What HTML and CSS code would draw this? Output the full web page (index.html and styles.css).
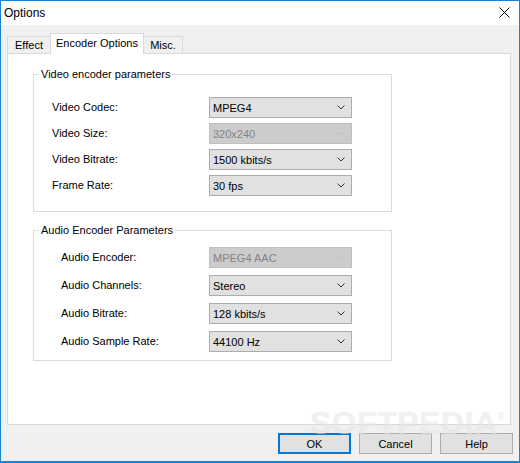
FILE: index.html
```html
<!DOCTYPE html>
<html lang="en">
<head>
    <meta charset="UTF-8">
    <title>Options</title>
    <link rel="stylesheet" href="styles.css">
</head>
<body>
    <div class="window">
        <div class="titlebar">
            <span class="title">Options</span>
            <svg class="close" width="11" height="11" viewBox="0 0 11 11">
                <path d="M0.5 0.5 L10.5 10.5 M10.5 0.5 L0.5 10.5" stroke="#000" stroke-width="1" fill="none"/>
            </svg>
        </div>

        <div class="dialog">
            <div class="tabs">
                <div class="tab tab-effect">Effect</div>
                <div class="tab tab-encoder active">Encoder Options</div>
                <div class="tab tab-misc">Misc.</div>
            </div>

            <div class="panel">
                <fieldset class="group group-video">
                    <legend>Video encoder parameters</legend>
                    <div class="rows">
                        <label>Video Codec:</label>
                        <div class="combo">MPEG4<svg class="arrow" width="8" height="5" viewBox="0 0 8 5"><path d="M0.5 0.5 L4 4 L7.5 0.5" fill="none" stroke="#333"/></svg></div>
                        <label>Video Size:</label>
                        <div class="combo disabled">320x240<svg class="arrow" width="8" height="5" viewBox="0 0 8 5"><path d="M0.5 0.5 L4 4 L7.5 0.5" fill="none" stroke="#bdbdbd"/></svg></div>
                        <label>Video Bitrate:</label>
                        <div class="combo">1500 kbits/s<svg class="arrow" width="8" height="5" viewBox="0 0 8 5"><path d="M0.5 0.5 L4 4 L7.5 0.5" fill="none" stroke="#333"/></svg></div>
                        <label>Frame Rate:</label>
                        <div class="combo">30 fps<svg class="arrow" width="8" height="5" viewBox="0 0 8 5"><path d="M0.5 0.5 L4 4 L7.5 0.5" fill="none" stroke="#333"/></svg></div>
                    </div>
                </fieldset>

                <fieldset class="group group-audio">
                    <legend>Audio Encoder Parameters</legend>
                    <div class="rows">
                        <label>Audio Encoder:</label>
                        <div class="combo disabled">MPEG4 AAC<svg class="arrow" width="8" height="5" viewBox="0 0 8 5"><path d="M0.5 0.5 L4 4 L7.5 0.5" fill="none" stroke="#bdbdbd"/></svg></div>
                        <label>Audio Channels:</label>
                        <div class="combo">Stereo<svg class="arrow" width="8" height="5" viewBox="0 0 8 5"><path d="M0.5 0.5 L4 4 L7.5 0.5" fill="none" stroke="#333"/></svg></div>
                        <label>Audio Bitrate:</label>
                        <div class="combo">128 kbits/s<svg class="arrow" width="8" height="5" viewBox="0 0 8 5"><path d="M0.5 0.5 L4 4 L7.5 0.5" fill="none" stroke="#333"/></svg></div>
                        <label>Audio Sample Rate:</label>
                        <div class="combo">44100 Hz<svg class="arrow" width="8" height="5" viewBox="0 0 8 5"><path d="M0.5 0.5 L4 4 L7.5 0.5" fill="none" stroke="#333"/></svg></div>
                    </div>
                </fieldset>
            </div>

            <div class="buttons">
                <button class="btn default">OK</button>
                <button class="btn">Cancel</button>
                <button class="btn">Help</button>
            </div>
        </div>

        <div class="watermark">SOFTPEDIA<sup>&reg;</sup></div>
    </div>
</body>
</html>
```

FILE: styles.css
```css
body {
    margin: 0;
    padding: 0;
    font-family: "Liberation Sans", Arial, sans-serif;
    font-size: 11px;
    color: #000;
}
.window {
    position: relative;
    width: 520px;
    height: 463px;
    box-sizing: border-box;
    border: 1px solid #1883d7;
    border-bottom-width: 2px;
    background-color: #f0f0f0;
    display: flex;
    flex-direction: column;
    overflow: hidden;
}
.titlebar {
    height: 24px;
    background-color: #fff;
    display: flex;
    justify-content: space-between;
    align-items: center;
}
.titlebar .title {
    font-size: 12px;
    padding-left: 3px;
    margin-top: -1px;
}
.titlebar .close {
    margin-right: 9px;
    margin-top: -2px;
}
.dialog {
    padding: 8px 8px 0 6px;
}
.tabs {
    position: relative;
    z-index: 1;
    height: 21px;
    margin-bottom: -1px;
    display: flex;
    align-items: flex-end;
}
.tab {
    box-sizing: border-box;
    height: 17px;
    margin-bottom: 1px;
    border: 1px solid #d9d9d9;
    border-bottom: 0;
    background-color: #f0f0f0;
    text-align: center;
    line-height: 16px;
}
.tab + .tab {
    margin-left: -1px;
}
.tab-effect {
    width: 44px;
}
.tab-encoder {
    width: 94px;
}
.tab-misc {
    width: 40px;
}
.tab.active {
    height: 21px;
    margin-bottom: 0;
    background-color: #fff;
    line-height: 18px;
}
.panel {
    box-sizing: border-box;
    height: 372px;
    border: 1px solid #d9d9d9;
    background-color: #fff;
    padding-left: 25px;
    padding-top: 13px;
}
.group {
    box-sizing: border-box;
    width: 359px;
    margin: 0;
    border: 1px solid #dcdcdc;
    padding: 0;
}
.group legend {
    margin-left: 5px;
    padding: 0 2px;
    line-height: 14px;
}
.group-video {
    padding: 16px 0 15px 0;
}
.group-audio {
    margin-top: 11px;
    padding: 10px 0 8px 0;
}
.rows {
    display: grid;
    grid-template-columns: 157px 143px;
    grid-auto-rows: 21px;
    row-gap: 5px;
    align-items: center;
    padding-left: 18px;
}
.group-audio .rows {
    grid-template-columns: 148px 143px;
    row-gap: 7px;
    padding-left: 27px;
}
.rows label {
    margin-top: -2px;
}
.combo {
    box-sizing: border-box;
    height: 21px;
    border: 1px solid #adadad;
    background-color: #e1e1e1;
    padding: 0 6px 0 3px;
    display: flex;
    align-items: center;
    justify-content: space-between;
}
.combo.disabled {
    border-color: #bfbfbf;
    background-color: #cccccc;
    color: #838383;
}
.buttons {
    display: flex;
    justify-content: flex-end;
    gap: 8px;
    margin-top: 8px;
    margin-right: -2px;
}
.btn {
    box-sizing: border-box;
    width: 73px;
    height: 21px;
    border: 1px solid #adadad;
    background-color: #e1e1e1;
    font-family: "Liberation Sans", Arial, sans-serif;
    font-size: 11px;
    color: #000;
    padding: 0;
}
.btn.default {
    border: 2px solid #0078d7;
}
.watermark {
    position: absolute;
    left: 309px;
    top: 404px;
    font-family: "Liberation Sans", Arial, sans-serif;
    font-weight: bold;
    font-size: 32px;
    letter-spacing: 0.5px;
    color: rgba(255, 255, 255, 0.55);
    text-shadow: 0 0 1px rgba(0, 0, 0, 0.12);
    pointer-events: none;
}
.watermark sup {
    font-size: 10px;
    vertical-align: top;
    position: relative;
    top: 6px;
}
```
